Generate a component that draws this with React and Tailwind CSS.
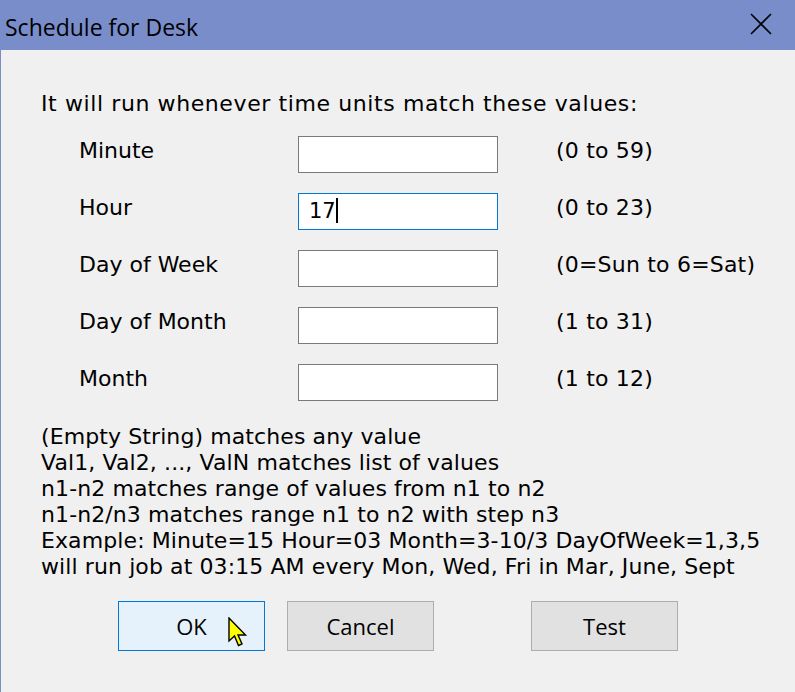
import React, { useState } from "react";

const fields = [
  { label: "Minute", range: "(0 to 59)", value: "" },
  { label: "Hour", range: "(0 to 23)", value: "17", focused: true },
  { label: "Day of Week", range: "(0=Sun to 6=Sat)", value: "" },
  { label: "Day of Month", range: "(1 to 31)", value: "" },
  { label: "Month", range: "(1 to 12)", value: "" },
];

const help = [
  "(Empty String) matches any value",
  "Val1, Val2, ..., ValN matches list of values",
  "n1-n2 matches range of values from n1 to n2",
  "n1-n2/n3 matches range n1 to n2 with step n3",
  "Example: Minute=15 Hour=03 Month=3-10/3 DayOfWeek=1,3,5",
  "will run job at 03:15 AM every Mon, Wed, Fri in Mar, June, Sept",
];

const App = () => {
  const [values, setValues] = useState(fields.map((f) => f.value));

  const handleChange = (index, e) => {
    const next = [...values];
    next[index] = e.target.value;
    setValues(next);
  };

  return (
    <div className="relative w-[795px] h-[692px] flex flex-col bg-[#f0f0f0] overflow-hidden">
      {/* title bar */}
      <div className="h-[50px] shrink-0 bg-[#798dcb] flex items-center justify-between pl-[5px] pr-[23px]">
        <span className="text-[23px] text-black font-['Open_Sans',sans-serif] leading-none mt-[4px]">
          Schedule for Desk
        </span>
        <svg width="22" height="22" viewBox="0 0 22 22" className="-mt-[3px]">
          <path d="M1 1 L21 21 M21 1 L1 21" stroke="#000" strokeWidth="1.6" />
        </svg>
      </div>

      <div className="flex-1 border-l border-[#798dcb] pl-[40px] pt-[41px] font-['DejaVu_Sans',Verdana,sans-serif] text-[22px] text-black">
        <p className="leading-[26px] tracking-[0.6px]">It will run whenever time units match these values:</p>

        <div className="mt-[9px] ml-[38px]">
          {fields.map((f, i) => (
            <div key={f.label} className="h-[57px] flex items-center">
              <span className="w-[219px] -mt-[8px]">{f.label}</span>
              <div
                className={
                  "w-[200px] h-[37px] bg-white border flex items-center px-[10px] " +
                  (f.focused ? "border-[#0078d7]" : "border-[#7a7a7a]")
                }
              >
                <input
                  type="text"
                  value={values[i]}
                  onChange={(e) => handleChange(i, e)}
                  className="w-full outline-none bg-transparent text-[21px] caret-transparent"
                />
              </div>
              <span className="ml-[58px] -mt-[8px] tracking-[0.2px]">{f.range}</span>
            </div>
          ))}
        </div>

        <div className="mt-[13px] leading-[26px] tracking-[0.1px]">
          {help.map((line) => (
            <p key={line}>{line}</p>
          ))}
        </div>

        <div className="mt-[21px] ml-[77px] flex font-['Open_Sans',sans-serif] text-[22px]">
          <button className="w-[147px] h-[50px] bg-[#e5f1fb] border border-[#0078d7]">OK</button>
          <button className="w-[147px] h-[50px] ml-[22px] bg-[#e1e1e1] border border-[#adadad]">Cancel</button>
          <button className="w-[147px] h-[50px] ml-[97px] bg-[#e1e1e1] border border-[#adadad]">Test</button>
        </div>
      </div>

      {/* text caret in Hour field */}
      <div className="absolute left-[336px] top-[198px] w-[2px] h-[25px] bg-black" />

      {/* mouse pointer */}
      <svg className="absolute left-[228px] top-[617px]" width="20" height="31" viewBox="0 0 20 31">
        <path
          d="M1 1 L1 24 L6.5 19 L10.5 28.5 L14 27 L10 18 L17.5 18 Z"
          fill="#ffff00"
          stroke="#000"
          strokeWidth="1.4"
          strokeLinejoin="miter"
        />
      </svg>
    </div>
  );
};

export default App;
